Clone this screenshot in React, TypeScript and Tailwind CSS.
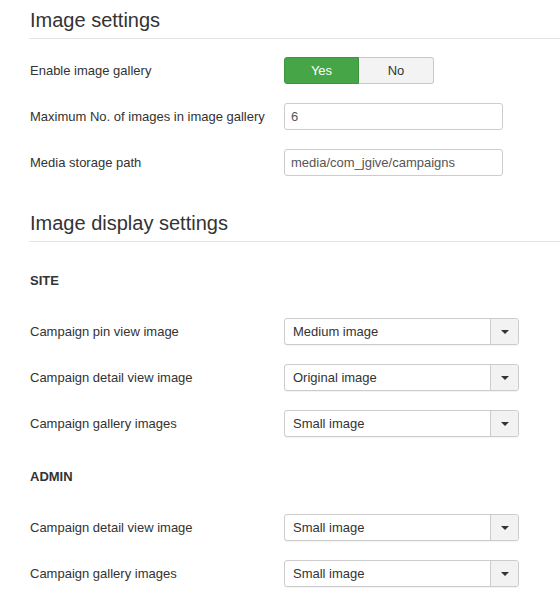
const font = { fontFamily: '"Liberation Sans", Arial, sans-serif' };

function Row({ label, children }: { label: string; children: React.ReactNode }) {
  return (
    <div className="flex items-center h-[27px] mb-[19px]">
      <label className="w-[254px] shrink-0 text-[13px] text-[#333]">{label}</label>
      {children}
    </div>
  );
}

function TextInput({ value }: { value: string }) {
  return (
    <div className="w-[219px] h-[27px] border border-[#ccc] rounded-[3px] bg-white px-[6px] flex items-center text-[13px] text-[#555]">
      {value}
    </div>
  );
}

function Select({ value }: { value: string }) {
  return (
    <div className="w-[235px] h-[27px] flex border border-[#ccc] rounded-[3px] bg-white shadow-[0_1px_1px_rgba(0,0,0,0.05)]">
      <div className="flex-1 flex items-center px-[8px] text-[13px] text-[#333]">{value}</div>
      <div className="w-[28px] border-l border-[#ccc] bg-[#f2f2f2] rounded-r-[3px] flex items-center justify-center">
        <span className="block w-0 h-0 border-l-[4px] border-r-[4px] border-t-[4px] border-l-transparent border-r-transparent border-t-[#333]" />
      </div>
    </div>
  );
}

export default function App() {
  return (
    <div className="min-h-screen bg-white pl-[30px] text-[#333]" style={font}>
      {/* Image settings */}
      <h2 className="text-[20px] leading-[24px] pt-[8px] pb-[6px] border-b border-[#e5e5e5] -ml-[1px] pl-[1px]">
        Image settings
      </h2>
      <div className="pt-[18px]">
        <Row label="Enable image gallery">
          <div className="flex h-[27px] text-[13px]">
            <div className="w-[75px] flex items-center justify-center bg-[#46a546] text-white border border-[#3f933f] rounded-l-[3px]">
              Yes
            </div>
            <div className="w-[75px] flex items-center justify-center bg-[#f3f3f3] text-[#333] border border-l-0 border-[#c8c8c8] rounded-r-[3px]">
              No
            </div>
          </div>
        </Row>
        <Row label="Maximum No. of images in image gallery">
          <TextInput value="6" />
        </Row>
        <Row label="Media storage path">
          <TextInput value="media/com_jgive/campaigns" />
        </Row>
      </div>

      {/* Image display settings */}
      <h2 className="text-[20px] leading-[24px] pt-[16px] pb-[6px] border-b border-[#e5e5e5] -ml-[1px] pl-[1px]">
        Image display settings
      </h2>
      <h3 className="text-[13px] font-bold mt-[31px] mb-[29px] leading-[16px]">SITE</h3>
      <Row label="Campaign pin view image">
        <Select value="Medium image" />
      </Row>
      <Row label="Campaign detail view image">
        <Select value="Original image" />
      </Row>
      <Row label="Campaign gallery images">
        <Select value="Small image" />
      </Row>
      <h3 className="text-[13px] font-bold mt-[32px] mb-[29px] leading-[16px]">ADMIN</h3>
      <Row label="Campaign detail view image">
        <Select value="Small image" />
      </Row>
      <Row label="Campaign gallery images">
        <Select value="Small image" />
      </Row>
    </div>
  );
}
